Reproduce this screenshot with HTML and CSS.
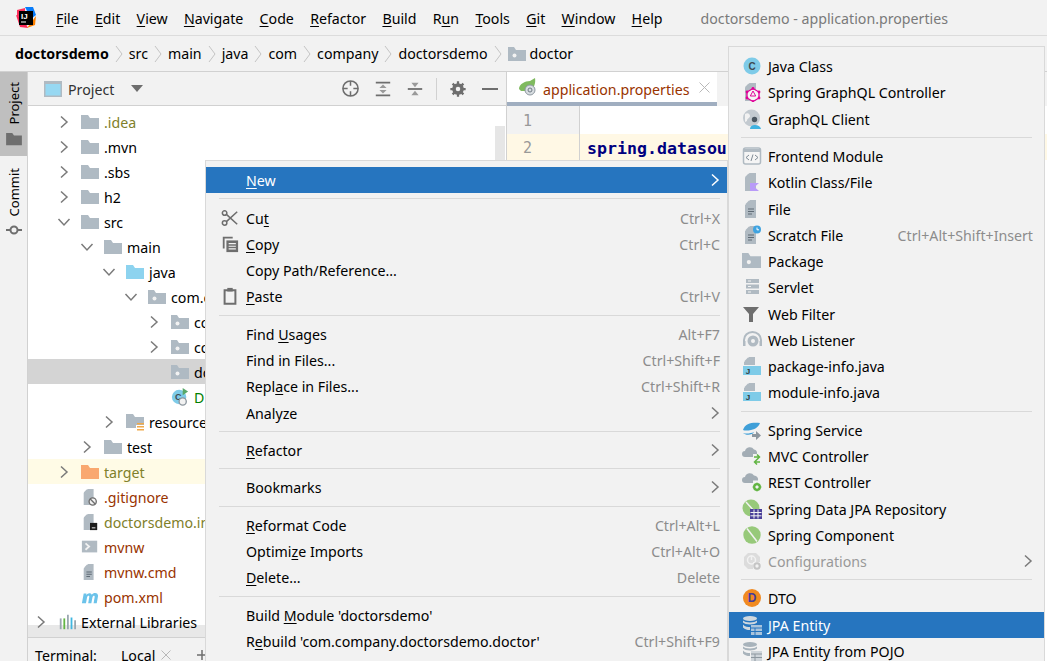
FILE: index.html
```html
<!DOCTYPE html>
<html lang="en">
<head>
    <meta charset="UTF-8">
    <title>doctorsdemo - application.properties</title>
    <link rel="stylesheet" href="styles.css">
</head>
<body>
<svg class="sprite" width="0" height="0">
    <defs>
        <symbol id="chev" viewBox="0 0 10 14"><path d="M2 1.500 8 7 2 12.500" fill="none" stroke="#7a7a7a" stroke-width="1.500"/></symbol>
        <symbol id="chev-white" viewBox="0 0 10 14"><path d="M2 1.500 8 7 2 12.500" fill="none" stroke="#fff" stroke-width="1.500"/></symbol>
        <symbol id="chev-down" viewBox="0 0 14 10"><path d="M1.500 2 7 8l5.500-6" fill="none" stroke="#7a7a7a" stroke-width="1.500"/></symbol>
        <symbol id="crumb" viewBox="0 0 8 18"><path d="M1 1l6 8-6 8" fill="none" stroke="#c4c4c4" stroke-width="1"/></symbol>
        <symbol id="folder" viewBox="0 0 18 16"><path d="M0 1h7l2 3h9v11H0z" fill="#afbac3"/></symbol>
        <symbol id="folder-src" viewBox="0 0 18 16"><path d="M0 1h7l2 3h9v11H0z" fill="#8dd3ef"/></symbol>
        <symbol id="folder-out" viewBox="0 0 18 16"><path d="M0 1h7l2 3h9v11H0z" fill="#f9a870"/></symbol>
        <symbol id="folder-pkg" viewBox="0 0 18 16"><path d="M0 1h6l2 3h10v11H0z" fill="#afbac3"/><circle cx="6.500" cy="9.500" r="2" fill="#f2f2f2"/></symbol>
        <symbol id="folder-res" viewBox="0 0 18 18"><path d="M0 1h7l2 3h9v8h-8v3H0z" fill="#afbac3"/><path d="M11 10h7v1.500h-7zm0 3h7v1.500h-7zm0 3h7v1.500h-7z" fill="#f0a94a"/></symbol>
        <symbol id="page" viewBox="0 0 20 20"><path d="M8 1h6v18H3V6zM7 1.500V5H3.500z" fill="#b0bac2"/><path d="M6 10h6M6 12.500h6M6 15h4" stroke="#5f6b75" stroke-width="1.200"/></symbol>
        <symbol id="page-blank" viewBox="0 0 20 20"><path d="M7.500 1H14v18H3V5.500zM6.500 1.500V5H3z" fill="#b0bac2"/></symbol>
        <symbol id="c-class" viewBox="0 0 20 20"><circle cx="10" cy="10" r="8.500" fill="#7ecbe8"/><text x="10" y="13.500" class="glyph" fill="#3e4a52">C</text></symbol>
        <symbol id="run-class" viewBox="0 0 20 20"><circle cx="9" cy="10" r="8" fill="#7ecbe8"/><text x="8" y="13.500" class="glyph" fill="#3e4a52">C</text><path d="M13 0v8l6-4z" fill="#59a869"/><circle cx="13" cy="15" r="4" fill="#f2f2f2" stroke="#8d979f" stroke-width="1.500"/></symbol>
        <symbol id="graphql" viewBox="0 0 20 20"><use href="#page-blank"/><path d="M11 6.500l6 3.500v6l-6 3.500L5 16v-6z" fill="#f5f5f5" stroke="#e10098" stroke-width="1.300"/><path d="M11 9l2.700 5H8.300z" fill="none" stroke="#e10098"/><g fill="#e10098"><circle cx="11" cy="6.500" r="1.400"/><circle cx="17" cy="10" r="1.400"/><circle cx="17" cy="16" r="1.400"/><circle cx="11" cy="19" r="1"/><circle cx="5" cy="16" r="1.400"/><circle cx="5" cy="10" r="1.400"/></g></symbol>
        <symbol id="globe-user" viewBox="0 0 20 20"><circle cx="9.500" cy="9" r="8.500" fill="#c3cad0"/><path d="M3 5c3-2 5 0 5 2s-3 2-3 5l-2 1z" fill="#f2f2f2"/><circle cx="12.500" cy="10.500" r="2.700" fill="#4a5660"/><path d="M8 20c0-5.500 10-5.500 11 0z" fill="#3fb2e0"/></symbol>
        <symbol id="frontend" viewBox="0 0 20 20"><rect x="1.500" y="2" width="17" height="16" rx="2" fill="#f5f5f5" stroke="#b0bac2" stroke-width="1.500"/><path d="M2 3h16v3H2z" fill="#b0bac2"/><path d="M7 9l-3 2.500L7 14M13 9l3 2.500-3 2.500M11 8.500l-2 6.500" fill="none" stroke="#7f8b95"/></symbol>
        <symbol id="kotlin" viewBox="0 0 20 20"><use href="#page-blank"/><path d="M8 11h9l-4.500 4 4.500 4H8z" fill="#b99bf8"/></symbol>
        <symbol id="scratch" viewBox="0 0 20 20"><use href="#page"/><circle cx="15" cy="4.500" r="4" fill="#3fa3e0"/><path d="M15 2.500v2.300h2" fill="none" stroke="#fff"/></symbol>
        <symbol id="servlet" viewBox="0 0 20 20"><path d="M4 2h13v4H4zm0 5.500h13v4H4zM4 13h13v4H4z" fill="#b0bac2"/><path d="M6 4h3M6 9.500h3M6 15h3" stroke="#f2f2f2"/></symbol>
        <symbol id="filter" viewBox="0 0 20 20"><path d="M1 3h16l-6 7v8H7v-8z" fill="#6e6e6e"/></symbol>
        <symbol id="listener" viewBox="0 0 20 20"><circle cx="11" cy="11" r="5.500" fill="#b0bac2"/><path d="M2 14v-4a8.500 8 0 0 1 17 0v4" fill="none" stroke="#b0bac2" stroke-width="2"/><path d="M1 11h2.500v5H1zm16.500 0H20v5h-2.500z" fill="#b0bac2"/><circle cx="11" cy="11" r="2" fill="#f2f2f2"/></symbol>
        <symbol id="info-java" viewBox="0 0 20 20"><path d="M7 1h6v8H2V6zM6 1.500V5H2.500z" fill="#b0bac2"/><path d="M1 10h18v9H1z" fill="#7ecbe8"/><text x="6" y="18" class="glyph-small" fill="#2f3a42">J</text></symbol>
        <symbol id="spring-service" viewBox="0 0 20 20"><path d="M1 10C3 3 11 2 18 3c-1 3-4 6-9 7-3 .600-6 1-8 0z" fill="#3f9fd8"/><path d="M1 13c3 1 8 .500 11-1-1 3-8 4-11 1z" fill="#3f9fd8"/><path d="M10 14h4v-3l5 4.500-5 4.500v-3h-4z" fill="#8d979f"/></symbol>
        <symbol id="cloud-arrows" viewBox="0 0 20 20"><path d="M3 11a3 3 0 0 1 0-6 5 5 0 0 1 9-1.500A4 4 0 0 1 15 8h-4v3z" fill="#a3adb5"/><path d="M12 11h5M15 8.500l2.500 2.500L15 13.500M18 16h-5M15 13.500 12.500 16l2.500 2.500" fill="none" stroke="#62b543" stroke-width="1.500"/></symbol>
        <symbol id="cloud-gear" viewBox="0 0 20 20"><path d="M3 11a3 3 0 0 1 0-6 5 5 0 0 1 9-1.500A4 4 0 0 1 16 8.500h-5V11z" fill="#a3adb5"/><circle cx="15" cy="15" r="3" fill="none" stroke="#62b543" stroke-width="2"/><path d="M15 10.500v9M10.500 15h9M12 12l6 6M18 12l-6 6" stroke="#62b543"/><circle cx="15" cy="15" r="1.300" fill="#f2f2f2"/></symbol>
        <symbol id="spring-data" viewBox="0 0 20 20"><circle cx="9" cy="9" r="8.500" fill="#97c97a"/><path d="M4 3l9 10" stroke="#f2f2f2" stroke-width="1.500"/><path d="M8 10h12v10H8z" fill="#4b4099"/><path d="M8.500 13.500h11M8.500 16.800h11M12 10.500v9M16 10.500v9" stroke="#f2f2f2"/></symbol>
        <symbol id="spring-comp" viewBox="0 0 20 20"><circle cx="10" cy="10" r="8.700" fill="#97c97a"/><path d="M5 3.500 15 16.500" stroke="#f2f2f2" stroke-width="1.500"/></symbol>
        <symbol id="config" viewBox="0 0 20 20"><path d="M6 2h8l4 4v5h-7v7H6l-4-4V6z" fill="#dcdcdc"/><circle cx="9.500" cy="9" r="4" fill="none" stroke="#f2f2f2" stroke-width="1.500"/><path d="M9.500 4.500V9" stroke="#f2f2f2" stroke-width="1.500"/><circle cx="15" cy="15" r="2.700" fill="none" stroke="#c4c4c4" stroke-width="2"/></symbol>
        <symbol id="dto" viewBox="0 0 20 20"><circle cx="10" cy="10" r="9" fill="#f08a21"/><text x="10" y="14.200" class="glyph-big" fill="#463b9c">D</text></symbol>
        <symbol id="jpa" viewBox="0 0 20 20"><ellipse cx="8" cy="3.500" rx="7" ry="2.500" fill="#a8b3bb"/><path d="M1 5.500c2 2.500 12 2.500 14 0v2c-2 2.500-12 2.500-14 0zm0 4c2 2.500 5 2.500 7 2.500v3c-3 0-5-.500-7-2.500zm0 0" fill="#a8b3bb"/><path d="M9 10h11v10H9z" fill="#cfd5da"/><path d="M9 13h11M9 16.500h11M13 13v7" stroke="#8d979f"/></symbol>
        <symbol id="jpa-sel" viewBox="0 0 20 20"><ellipse cx="8" cy="3.500" rx="7" ry="2.500" fill="#cfd8df"/><path d="M1 5.500c2 2.500 12 2.500 14 0v2c-2 2.500-12 2.500-14 0zm0 4c2 2.500 5 2.500 7 2.500v3c-3 0-5-.500-7-2.500zm0 0" fill="#cfd8df"/><path d="M9 10h11v10H9z" fill="#a9c4dc"/><path d="M9 13h11M9 16.500h11M13 13v7" stroke="#2675bf"/></symbol>
        <symbol id="scissors" viewBox="0 0 20 20"><circle cx="4" cy="4.500" r="2.500" fill="none" stroke="#6e6e6e" stroke-width="1.700"/><circle cx="4" cy="15.500" r="2.500" fill="none" stroke="#6e6e6e" stroke-width="1.700"/><path d="M6 6l12 11M6 14 18 3" stroke="#6e6e6e" stroke-width="1.700"/></symbol>
        <symbol id="copy" viewBox="0 0 20 20"><path d="M2 2h11v2H4v11H2z" fill="#6e6e6e"/><path d="M6 6h13v13H6z" fill="#6e6e6e"/><path d="M8.500 9.500h8M8.500 12.500h8M8.500 15.500h8" stroke="#f2f2f2" stroke-width="1.300"/></symbol>
        <symbol id="paste" viewBox="0 0 20 20"><path d="M4 3.500h12v15H4z" fill="none" stroke="#6e6e6e" stroke-width="2.200"/><path d="M7 1h6v4H7z" fill="#6e6e6e"/></symbol>
        <symbol id="locate" viewBox="0 0 20 20"><circle cx="10" cy="10" r="8" fill="none" stroke="#6e6e6e" stroke-width="1.600"/><path d="M10 2v5M10 13v5M2 10h5M13 10h5" stroke="#6e6e6e" stroke-width="1.600"/></symbol>
        <symbol id="expand" viewBox="0 0 20 20"><path d="M2 2h16v2H2zm0 14h16v2H2z" fill="#6e6e6e"/><path d="M10 5l4 4H6zm0 10-4-4h8z" fill="#9a9a9a"/></symbol>
        <symbol id="collapse" viewBox="0 0 20 20"><path d="M2 9h16v2H2z" fill="#6e6e6e"/><path d="M10 8 6 3h8zm0 4 4 5H6z" fill="#9a9a9a"/></symbol>
        <symbol id="gear" viewBox="0 0 20 20"><circle cx="10" cy="10" r="5" fill="none" stroke="#6e6e6e" stroke-width="3"/><path d="M10 1.500v17M1.500 10h17M4 4l12 12M16 4 4 16" stroke="#6e6e6e" stroke-width="2.500"/><circle cx="10" cy="10" r="2.500" fill="#f2f2f2"/></symbol>
        <symbol id="spring-tab" viewBox="0 0 20 20"><path d="M1 12C1 7 7 4 12 4l5-3c1 5-1 12-7 13H3z" fill="#7fba5f"/><circle cx="12" cy="13" r="5" fill="#d8dde1" stroke="#8d979f"/><circle cx="12" cy="13" r="2" fill="none" stroke="#6e7a84"/></symbol>
    </defs>
</svg>

<div class="titlebar">
    <svg class="logo" width="21" height="21" viewBox="0 0 21 21">
        <path d="M2 3l8-2v8H2z" fill="#fe315d"/><path d="M10 0h8l3 8-5 4z" fill="#087cfa"/><path d="M1 8l4 12 8 1-5-10z" fill="#fe2857"/><path d="M12 21l8-3 1-9z" fill="#ff8100"/>
        <rect x="4" y="4" width="14" height="14" fill="#000"/>
        <text x="6" y="11.500" class="logo-text">IJ</text>
        <rect x="6" y="14.500" width="5" height="1" fill="#fff"/>
    </svg>
    <nav class="menubar">
        <span><u>F</u>ile</span><span><u>E</u>dit</span><span><u>V</u>iew</span><span><u>N</u>avigate</span><span><u>C</u>ode</span><span><u>R</u>efactor</span><span><u>B</u>uild</span><span>R<u>u</u>n</span><span><u>T</u>ools</span><span><u>G</u>it</span><span><u>W</u>indow</span><span><u>H</u>elp</span>
    </nav>
    <div class="window-title">doctorsdemo - application.properties</div>
</div>

<div class="crumbs">
    <b>doctorsdemo</b><svg class="sep-c"><use href="#crumb"/></svg>
    <span>src</span><svg class="sep-c"><use href="#crumb"/></svg>
    <span>main</span><svg class="sep-c"><use href="#crumb"/></svg>
    <span>java</span><svg class="sep-c"><use href="#crumb"/></svg>
    <span>com</span><svg class="sep-c"><use href="#crumb"/></svg>
    <span>company</span><svg class="sep-c"><use href="#crumb"/></svg>
    <span>doctorsdemo</span><svg class="sep-c"><use href="#crumb"/></svg>
    <svg class="crumb-ico"><use href="#folder-pkg"/></svg><span>doctor</span>
</div>

<div class="main">
    <div class="strip">
        <div class="strip-tab active">
            <span class="vtext">Project</span>
            <svg width="16" height="14" viewBox="0 0 18 16"><path d="M0 1h7l2 3h9v11H0z" fill="#6e6e6e"/></svg>
        </div>
        <div class="strip-tab">
            <span class="vtext">Commit</span>
            <svg width="18" height="12" viewBox="0 0 18 12"><circle cx="9" cy="6" r="3.500" fill="none" stroke="#6e6e6e" stroke-width="2"/><path d="M1 6h4.500M12.500 6H17" stroke="#6e6e6e" stroke-width="2"/></svg>
        </div>
    </div>

    <div class="project">
        <div class="panel-head">
            <svg class="win-ico" width="18" height="16" viewBox="0 0 18 16"><path d="M0 0h18v16H0z" fill="#b0bac2"/><path d="M1.500 3h15v11.500h-15z" fill="#97d8f2"/></svg>
            <span class="panel-title">Project</span>
            <svg class="caret" width="12" height="7" viewBox="0 0 12 7"><path d="M0 0h12L6 7z" fill="#6e6e6e"/></svg>
            <div class="panel-tools">
                <svg width="19" height="19"><use href="#locate"/></svg>
                <svg class="tool-mid" width="18" height="18"><use href="#expand"/></svg>
                <svg width="18" height="18"><use href="#collapse"/></svg>
                <i class="tool-sep"></i>
                <svg class="tool-gear" width="18" height="18"><use href="#gear"/></svg>
                <svg class="tool-min" width="16" height="2" viewBox="0 0 16 2"><path d="M0 0h16v2H0z" fill="#6e6e6e"/></svg>
            </div>
        </div>
        <div class="tree">
            <div class="tree-scroll"></div>
            <div class="row l1"><svg class="arrow"><use href="#chev"/></svg><svg class="t-ico"><use href="#folder"/></svg><span class="olive">.idea</span></div>
            <div class="row l1"><svg class="arrow"><use href="#chev"/></svg><svg class="t-ico"><use href="#folder"/></svg><span>.mvn</span></div>
            <div class="row l1"><svg class="arrow"><use href="#chev"/></svg><svg class="t-ico"><use href="#folder"/></svg><span>.sbs</span></div>
            <div class="row l1"><svg class="arrow"><use href="#chev"/></svg><svg class="t-ico"><use href="#folder"/></svg><span>h2</span></div>
            <div class="row l1"><svg class="arrow down"><use href="#chev-down"/></svg><svg class="t-ico"><use href="#folder"/></svg><span>src</span></div>
            <div class="row l2"><svg class="arrow down"><use href="#chev-down"/></svg><svg class="t-ico"><use href="#folder"/></svg><span>main</span></div>
            <div class="row l3"><svg class="arrow down"><use href="#chev-down"/></svg><svg class="t-ico"><use href="#folder-src"/></svg><span>java</span></div>
            <div class="row l4"><svg class="arrow down"><use href="#chev-down"/></svg><svg class="t-ico"><use href="#folder-pkg"/></svg><span>com.c</span></div>
            <div class="row l5"><svg class="arrow"><use href="#chev"/></svg><svg class="t-ico"><use href="#folder-pkg"/></svg><span>co</span></div>
            <div class="row l5"><svg class="arrow"><use href="#chev"/></svg><svg class="t-ico"><use href="#folder-pkg"/></svg><span>co</span></div>
            <div class="row l5 selected"><span class="arrow"></span><svg class="t-ico"><use href="#folder-pkg"/></svg><span>do</span></div>
            <div class="row l5"><span class="arrow"></span><svg class="t-ico"><use href="#run-class"/></svg><span class="green">D</span></div>
            <div class="row l3"><svg class="arrow"><use href="#chev"/></svg><svg class="t-ico"><use href="#folder-res"/></svg><span>resource</span></div>
            <div class="row l2"><svg class="arrow"><use href="#chev"/></svg><svg class="t-ico"><use href="#folder"/></svg><span>test</span></div>
            <div class="row l1 excluded"><svg class="arrow"><use href="#chev"/></svg><svg class="t-ico"><use href="#folder-out"/></svg><span class="olive">target</span></div>
            <div class="row l1"><span class="arrow"></span><svg class="t-ico" viewBox="0 0 20 20"><use href="#page-blank"/><circle cx="13" cy="15" r="4" fill="#f2f2f2" stroke="#6e6e6e" stroke-width="1.500"/><path d="M10 12l6 6" stroke="#6e6e6e" stroke-width="1.500"/></svg><span class="rust">.gitignore</span></div>
            <div class="row l1"><span class="arrow"></span><svg class="t-ico" viewBox="0 0 20 20"><use href="#page-blank"/><path d="M10 11h8v8h-8z" fill="#1c1c1c"/><path d="M12 16.500h4" stroke="#fff"/></svg><span class="olive">doctorsdemo.im</span></div>
            <div class="row l1"><span class="arrow"></span><svg class="t-ico" viewBox="0 0 20 20"><path d="M1 3h17v13H1z" fill="#b0bac2"/><path d="M5 6l4 3.500L5 13" fill="none" stroke="#f2f2f2" stroke-width="2"/></svg><span class="rust">mvnw</span></div>
            <div class="row l1"><span class="arrow"></span><svg class="t-ico"><use href="#page"/></svg><span class="rust">mvnw.cmd</span></div>
            <div class="row l1"><span class="arrow"></span><svg class="t-ico" viewBox="0 0 20 20"><path d="M1 17 3 6h3v2c1.500-2.500 4.500-3 6-.500 1.500-2.500 6.500-3 7 1l-1.500 8.500H14l1.200-7c.300-2-2-2-2.500.500L11.500 17H8l1.200-7c.300-2-2-2-2.500.500L5.500 17z" fill="#6cc3ea"/></svg><span class="rust">pom.xml</span></div>
            <div class="row l0"><svg class="arrow"><use href="#chev"/></svg><svg class="t-ico" viewBox="0 0 20 20"><path d="M2 6h2v12H2z" fill="#9aa7b0"/><path d="M6 6h2v12H6z" fill="#62b543"/><path d="M10 2h2v16h-2z" fill="#9aa7b0"/><path d="M14 5h2v13h-2z" fill="#40b6e0"/><path d="M18 8h2v10h-2z" fill="#9aa7b0"/></svg><span>External Libraries</span></div>
        </div>
        <div class="hscroll"></div>
        <div class="terminal">
            <span class="term-label">Terminal:</span><span class="term-tab">Local</span>
            <svg width="10" height="10" viewBox="0 0 10 10"><path d="M.5.500l9 9m0-9l-9 9" stroke="#b8b8b8"/></svg>
            <svg class="term-add" width="10" height="10" viewBox="0 0 10 10"><path d="M0 5h10M5 0v10" stroke="#6e6e6e" stroke-width="1.500"/></svg>
        </div>
    </div>

    <div class="editor">
        <div class="tabs">
            <div class="tab">
                <svg width="20" height="20"><use href="#spring-tab"/></svg>
                <span>application.properties</span>
                <svg class="tab-x" width="11" height="11" viewBox="0 0 11 11"><path d="M.5.500l10 10m0-10l-10 10" stroke="#b8b8b8"/></svg>
            </div>
        </div>
        <div class="code-line first"><span class="line-no">1</span><span class="code"></span></div>
        <div class="code-line current"><span class="line-no">2</span><span class="code">spring.datasou</span></div>
    </div>
</div>

<div class="menu menu-ctx">
    <div class="item sel"><span class="ico"></span><span><u>N</u>ew</span><svg class="more"><use href="#chev-white"/></svg></div>
    <hr>
    <div class="item"><svg class="ico"><use href="#scissors"/></svg><span>Cu<u>t</u></span><em>Ctrl+X</em></div>
    <div class="item"><svg class="ico"><use href="#copy"/></svg><span><u>C</u>opy</span><em>Ctrl+C</em></div>
    <div class="item"><span class="ico"></span><span>Copy Path/Reference...</span></div>
    <div class="item"><svg class="ico"><use href="#paste"/></svg><span><u>P</u>aste</span><em>Ctrl+V</em></div>
    <hr>
    <div class="item"><span class="ico"></span><span>Find <u>U</u>sages</span><em>Alt+F7</em></div>
    <div class="item"><span class="ico"></span><span>Find in Files...</span><em>Ctrl+Shift+F</em></div>
    <div class="item"><span class="ico"></span><span>Repl<u>a</u>ce in Files...</span><em>Ctrl+Shift+R</em></div>
    <div class="item"><span class="ico"></span><span>Analyze</span><svg class="more"><use href="#chev"/></svg></div>
    <hr>
    <div class="item"><span class="ico"></span><span><u>R</u>efactor</span><svg class="more"><use href="#chev"/></svg></div>
    <hr>
    <div class="item"><span class="ico"></span><span>Bookmarks</span><svg class="more"><use href="#chev"/></svg></div>
    <hr>
    <div class="item"><span class="ico"></span><span><u>R</u>eformat Code</span><em>Ctrl+Alt+L</em></div>
    <div class="item"><span class="ico"></span><span>Optimi<u>z</u>e Imports</span><em>Ctrl+Alt+O</em></div>
    <div class="item"><span class="ico"></span><span><u>D</u>elete...</span><em>Delete</em></div>
    <hr>
    <div class="item"><span class="ico"></span><span>Build <u>M</u>odule 'doctorsdemo'</span></div>
    <div class="item"><span class="ico"></span><span>R<u>e</u>build 'com.company.doctorsdemo.doctor'</span><em>Ctrl+Shift+F9</em></div>
</div>

<div class="menu menu-new">
    <div class="item"><svg class="ico"><use href="#c-class"/></svg><span>Java Class</span></div>
    <div class="item"><svg class="ico"><use href="#graphql"/></svg><span>Spring GraphQL Controller</span></div>
    <div class="item"><svg class="ico"><use href="#globe-user"/></svg><span>GraphQL Client</span></div>
    <hr>
    <div class="item"><svg class="ico"><use href="#frontend"/></svg><span>Frontend Module</span></div>
    <div class="item"><svg class="ico"><use href="#kotlin"/></svg><span>Kotlin Class/File</span></div>
    <div class="item"><svg class="ico"><use href="#page"/></svg><span>File</span></div>
    <div class="item"><svg class="ico"><use href="#scratch"/></svg><span>Scratch File</span><em>Ctrl+Alt+Shift+Insert</em></div>
    <div class="item"><svg class="ico" viewBox="0 0 20 18"><use href="#folder-pkg" width="19" height="17"/></svg><span>Package</span></div>
    <div class="item"><svg class="ico"><use href="#servlet"/></svg><span>Servlet</span></div>
    <div class="item"><svg class="ico"><use href="#filter"/></svg><span>Web Filter</span></div>
    <div class="item"><svg class="ico"><use href="#listener"/></svg><span>Web Listener</span></div>
    <div class="item"><svg class="ico"><use href="#info-java"/></svg><span>package-info.java</span></div>
    <div class="item"><svg class="ico"><use href="#info-java"/></svg><span>module-info.java</span></div>
    <hr>
    <div class="item"><svg class="ico"><use href="#spring-service"/></svg><span>Spring Service</span></div>
    <div class="item"><svg class="ico"><use href="#cloud-arrows"/></svg><span>MVC Controller</span></div>
    <div class="item"><svg class="ico"><use href="#cloud-gear"/></svg><span>REST Controller</span></div>
    <div class="item"><svg class="ico"><use href="#spring-data"/></svg><span>Spring Data JPA Repository</span></div>
    <div class="item"><svg class="ico"><use href="#spring-comp"/></svg><span>Spring Component</span></div>
    <div class="item off"><svg class="ico"><use href="#config"/></svg><span>Configurations</span><svg class="more"><use href="#chev"/></svg></div>
    <hr>
    <div class="item"><svg class="ico"><use href="#dto"/></svg><span>DTO</span></div>
    <div class="item sel"><svg class="ico"><use href="#jpa-sel"/></svg><span>JPA Entity</span></div>
    <div class="item"><svg class="ico"><use href="#jpa"/></svg><span>JPA Entity from POJO</span></div>
</div>
</body>
</html>
```

FILE: styles.css
```css
*{
    margin: 0;
    padding: 0;
    box-sizing: border-box;
}
html,body{
    height: 100%;
    overflow: hidden;
}
body{
    position: relative;
    background: #f2f2f2;
    color: #000;
    font: 14.2px/20px "Noto Sans", "Liberation Sans", sans-serif;
    display: flex;
    flex-direction: column;
}
.sprite{
    position: absolute;
}
u{
    text-underline-offset: 2px;
}
.glyph,.glyph-small,.glyph-big{
    font: bold 10px "Liberation Sans", sans-serif;
    text-anchor: middle;
}
.glyph-small{
    font-size: 8px;
}
.glyph-big{
    font-size: 12px;
}

/* title bar */
.titlebar{
    height: 36px;
    flex: none;
    display: flex;
    align-items: center;
    padding-left: 15px;
    border-bottom: 1px solid #dcdcdc;
}
.logo{
    margin-right: 20px;
}
.logo-text{
    font: bold 8px "Liberation Sans", sans-serif;
    fill: #fff;
}
.menubar{
    display: flex;
    gap: 16.25px;
    padding-top: 2px;
}
.window-title{
    margin-left: 38px;
    padding-top: 2px;
    color: #7a7a7a;
}

/* breadcrumbs */
.crumbs{
    height: 36px;
    flex: none;
    display: flex;
    align-items: center;
    padding-left: 15px;
    border-bottom: 1px solid #d1d1d1;
}
.sep-c{
    width: 8px;
    height: 18px;
    margin: 0 6px;
}
.crumb-ico{
    width: 18px;
    height: 16px;
    margin-right: 4px;
}

.main{
    flex: 1;
    display: flex;
    min-height: 0;
}

/* left tool strip */
.strip{
    width: 28px;
    flex: none;
    border-right: 1px solid #d1d1d1;
}
.strip-tab{
    height: 84px;
    display: flex;
    flex-direction: column;
    align-items: center;
    gap: 8px;
    padding-top: 12px;
    font-size: 13px;
}
.strip-tab.active{
    background: #bfbfbf;
    padding-top: 10px;
}
.vtext{
    writing-mode: vertical-rl;
    transform: rotate(180deg);
}

/* project panel */
.project{
    width: 479px;
    flex: none;
    display: flex;
    flex-direction: column;
    border-right: 1px solid #d1d1d1;
    overflow: hidden;
}
.panel-head{
    height: 34px;
    flex: none;
    display: flex;
    align-items: center;
    padding-left: 16px;
    border-bottom: 1px solid #d1d1d1;
}
.panel-title{
    margin-left: 6px;
    padding-top: 2px;
    color: #333;
}
.caret{
    margin-left: 17px;
}
.panel-tools{
    margin-left: auto;
    display: flex;
    align-items: center;
    gap: 12px;
    padding-right: 8px;
}
.tool-mid{
    margin: 0 2px;
}
.tool-gear{
    margin-right: 3px;
}
.tool-sep{
    width: 1px;
    height: 22px;
    background: #d1d1d1;
}
.tree{
    position: relative;
    flex: none;
    height: 519px;
    background: #fff;
    padding-top: 3px;
}
.tree-scroll{
    position: absolute;
    top: 20px;
    right: 1px;
    width: 10px;
    bottom: 0;
    background: #e6e6e6;
}
.row{
    height: 25px;
    display: flex;
    align-items: center;
    white-space: nowrap;
    position: relative;
}
.row > span:last-child{
    padding-top: 2px;
}
.l0{ padding-left: 2px; }
.l1{ padding-left: 25px; }
.l2{ padding-left: 48px; }
.l3{ padding-left: 70px; }
.l4{ padding-left: 92px; }
.l5{ padding-left: 115px; }
.arrow{
    width: 22px;
    height: 14px;
    flex: none;
}
.arrow.down{
    height: 10px;
}
.t-ico{
    width: 18px;
    height: 18px;
    flex: none;
    margin: 0 5px 0 6px;
}
.selected{
    background: #d4d4d4;
}
.excluded{
    background: #fffbe6;
}
.olive{
    color: #80802a;
}
.rust{
    color: #993300;
}
.green{
    color: #008000;
}
.hscroll{
    height: 13px;
    flex: none;
    background: #e8e8e8;
    border-bottom: 1px solid #d1d1d1;
}
.terminal{
    height: 23px;
    flex: none;
    display: flex;
    align-items: center;
    padding: 11px 0 0 7px;
    line-height: 15px;
    overflow: hidden;
}
.term-tab{
    margin: 0 6px 0 24px;
}
.term-add{
    margin-left: 26px;
}

/* editor */
.editor{
    flex: 1;
    background: #fff;
}
.tabs{
    height: 34px;
    background: #f2f2f2;
}
.tab{
    width: 210px;
    height: 34px;
    display: flex;
    align-items: center;
    padding-left: 11px;
    background: #fff;
    border-bottom: 4px solid #a0aec0;
    color: #993300;
}
.tab span{
    margin-left: 5px;
    padding-top: 5px;
}
.tab-x{
    margin-left: 9px;
}
.code-line{
    display: flex;
    height: 26px;
    align-items: center;
}
.code-line.first{
    height: 28px;
}
.line-no{
    width: 73px;
    height: 100%;
    padding-left: 16px;
    padding-top: 1px;
    display: flex;
    align-items: center;
    color: #999;
    font: 15px "DejaVu Sans Mono", monospace;
    background: #f2f2f2;
    border-right: 1px solid #d1d1d1;
    flex: none;
}
.current{
    background: #fff8e5;
}
.current .line-no{
    background: #fff8e5;
}
.code{
    padding-left: 7px;
    padding-top: 3px;
    font: bold 16.6px "DejaVu Sans Mono", monospace;
    color: #000080;
    white-space: nowrap;
}

/* popup menus */
.menu{
    position: absolute;
    bottom: 0;
    background: #f2f2f2;
    border: 1px solid #d9d9d9;
    border-bottom: 0;
    padding-top: 6px;
    overflow: hidden;
}
.menu-ctx{
    left: 205px;
    top: 160px;
    width: 523px;
}
.menu-new{
    left: 728px;
    top: 46px;
    width: 317px;
}
.menu hr{
    height: 1px;
    border: 0;
    background: #d9d9d9;
    margin-top: 5.1px;
    margin-bottom: 5.1px;
}
.menu-ctx hr{
    margin-left: 13px;
    margin-right: 7px;
}
.menu-new hr{
    margin-left: 12px;
    margin-right: 12px;
}
.item{
    height: 26.25px;
    display: flex;
    align-items: center;
    white-space: nowrap;
}
.item > span:not(.ico),.item em{
    padding-top: 2px;
}
.item em{
    margin-left: auto;
    font-style: normal;
    color: #8c8c8c;
}
.ico{
    flex: none;
    display: block;
    width: 18px;
    height: 18px;
}
.menu-ctx .item{
    padding-left: 15px;
    padding-right: 7px;
}
.menu-ctx .ico{
    margin-right: 7px;
}
.menu-new .item{
    padding-left: 13px;
    padding-right: 11px;
}
.menu-new .ico{
    width: 20px;
    height: 20px;
    margin-right: 6px;
}
.more{
    margin-left: auto;
    width: 10px;
    height: 14px;
}
.sel{
    background: #2675bf;
    color: #fff;
}
.off{
    color: #999;
}
```
